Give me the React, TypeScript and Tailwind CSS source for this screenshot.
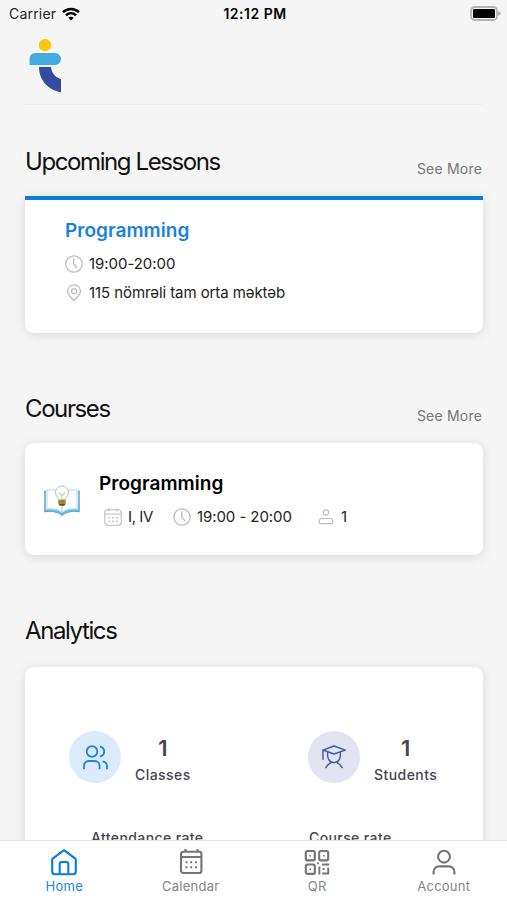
import type { ReactNode } from "react";

function Logo() {
    return (
        <svg width="32" height="54" viewBox="0 0 32 54">
            <circle cx="16" cy="6.2" r="6.2" fill="#fdc70d" />
            <path d="M6 14h20a6 6 0 0 1 0 12H.6V19.500A5.500 5.500 0 0 1 6 14z" fill="#43abe0" />
            <path d="M10 28h12c.5 5.500 4 10.500 10 12v13.200C19 51 10 41 10 28z" fill="#344c9f" />
        </svg>
    );
}

function Wifi() {
    return (
        <svg width="18" height="14" viewBox="0 0 18 14" fill="none" stroke="#000" strokeWidth="2.500">
            <path d="M1 5.200C5.500 .8 12.500 .8 17 5.200" />
            <path d="M4 8.300c2.900-2.700 7.100-2.700 10 0" />
            <path d="M6.300 10.700c1.600-1.400 3.800-1.400 5.400 0L9 13.500z" fill="#000" stroke="none" />
        </svg>
    );
}

function Battery() {
    return (
        <svg width="31" height="15" viewBox="0 0 31 15">
            <rect x="1" y="1" width="26" height="13" rx="3.500" fill="#f5f5f5" stroke="#b3b3b3" strokeWidth="1.800" />
            <rect x="3" y="3" width="22" height="9" rx="1" fill="#000" />
            <path d="M28 5.200v4.600q3-.8 3-2.300t-3-2.300z" fill="#b3b3b3" />
        </svg>
    );
}

function Clock() {
    return (
        <svg width="18" height="18" viewBox="0 0 18 18" fill="none" stroke="#bdbdbd" strokeWidth="1.300" strokeLinecap="round">
            <circle cx="9" cy="9" r="8.200" />
            <path d="M8.700 4v5l3 3.500" />
        </svg>
    );
}

function Pin() {
    return (
        <svg width="18" height="18" viewBox="0 0 18 18" fill="none" stroke="#bdbdbd" strokeWidth="1.300" strokeLinejoin="round">
            <path d="M9 16.800C7.500 14.500 2.600 11.500 2.600 7a6.400 6.200 0 0 1 12.800 0c0 4.500-4.900 7.500-6.400 9.800z" />
            <circle cx="9" cy="7.200" r="2.500" />
        </svg>
    );
}

function SmallCalendar() {
    return (
        <svg width="18" height="18" viewBox="0 0 18 18" fill="none" stroke="#bdbdbd" strokeWidth="1.100" strokeLinecap="round">
            <rect x=".8" y="1.800" width="16.400" height="15.400" rx="3" />
            <path d="M1 6h16M5 .7v2.200M13 .7v2.200" />
            <path d="M4.700 9.700h.6M8.700 9.700h.6M12.700 9.700h.6M4.700 13.300h.6M8.700 13.300h.6M12.700 13.300h.6" strokeWidth="1.400" />
        </svg>
    );
}

function SmallUser() {
    return (
        <svg width="16" height="16" viewBox="0 0 16 16" fill="none" stroke="#bdbdbd" strokeWidth="1.200">
            <circle cx="8" cy="3.500" r="2.700" />
            <path d="M4 9.500h8a2.800 2.800 0 0 1 2.800 2.800v.7a1.700 1.700 0 0 1-1.700 1.700H2.900A1.700 1.700 0 0 1 1.200 13v-.7A2.800 2.800 0 0 1 4 9.500z" />
        </svg>
    );
}

function Book() {
    return (
        <svg width="36" height="32" viewBox="0 0 36 32" fill="none">
            <path d="M1 5.500v21c6-.8 12-.5 17 3.500 5-4 11-4.300 17-3.500v-21" stroke="#369ac0" strokeWidth="1.300" />
            <path d="M1.500 24.500c6-.8 12.500-.3 16.500 3.500 4-3.800 10.500-4.300 16.500-3.500v2.300c-6-.6-12 0-16.500 4-4.500-4-10.500-4.600-16.500-4z" fill="#68b9d9" />
            <path d="M3 5v19c6-.6 11 .2 15 3.500 4-3.300 9-4.100 15-3.500V5c-5-.6-11 0-15 3.500C14 5 8 4.400 3 5z" fill="#fff" stroke="#a4d2e4" strokeWidth=".9" />
            <path d="M18 20v8" stroke="#8bb8c8" strokeWidth=".8" />
            <path d="M14.500 15c0-2.400-3-3.500-3-7.500a6.500 6.500 0 0 1 13 0c0 4-3 5.100-3 7.500z" fill="#fdfefc" stroke="#b2bac0" strokeWidth=".9" />
            <path d="M15.200 7.500l2.800 3.500 2.800-3.500M18 11v4" stroke="#b5e6a1" strokeWidth="1.300" />
            <path d="M14.300 14.700h7.400v4l-1.400 1.700h-4.600l-1.400-1.700z" fill="#a38435" />
            <path d="M14.600 19h6.800l-1.400 1.700h-4z" fill="#655528" />
        </svg>
    );
}

function UsersIcon() {
    return (
        <svg width="25" height="25" viewBox="0 0 25 25" fill="none" stroke="#1b84dc" strokeWidth="1.800" strokeLinecap="butt" strokeLinejoin="round">
            <circle cx="9" cy="6.500" r="5.300" />
            <path d="M1 24.300v-3.500a4.800 4.800 0 0 1 4.800-4.800h6a4.800 4.800 0 0 1 4.800 4.800v3.500" />
            <path d="M17 1.300c5.600 2 5.600 8.400 0 10.400M19.500 16.300c3 .6 4.500 2.300 4.500 4.700v3.300" />
        </svg>
    );
}

function StudentIcon() {
    return (
        <svg width="24" height="24" viewBox="0 0 24 24" fill="none" stroke="#3d56ae" strokeWidth="1.400" strokeLinecap="round" strokeLinejoin="round">
            <path d="M1 5.200L12 1l11.300 4.200-6 2L12 9 6.500 7z" />
            <path d="M1 5.200v9" />
            <path d="M5.700 7.500c-.8 5 1 10.100 6.300 10.100s7.100-5.100 6.300-10.100" />
            <path d="M3.800 22.600c1.200-2.200 3.200-4 5.200-5M20.200 22.600c-1.200-2.200-3.200-4-5.200-5" />
        </svg>
    );
}

function HomeIcon() {
    return (
        <svg width="26" height="27" viewBox="0 0 26 27" fill="none" stroke="#087cdf" strokeWidth="2.100" strokeLinejoin="round">
            <path d="M1.200 11q0-1 .8-1.600L13 1.200l11 8.200q.8.600.8 1.600v11.500a2.800 2.800 0 0 1-2.800 2.800H4a2.800 2.800 0 0 1-2.800-2.800z" />
            <path d="M8.700 25V15a2 2 0 0 1 2-2h4.600a2 2 0 0 1 2 2v10" />
        </svg>
    );
}

function CalendarIcon() {
    return (
        <svg width="26" height="27" viewBox="0 0 26 27" fill="none" stroke="#747474" strokeWidth="2.100">
            <rect x="3" y="2.800" width="20.400" height="21.200" rx="2.300" />
            <path d="M3 8h20" strokeWidth="2" />
            <path d="M7.500 0v3M19.500 0v3" />
            <path d="M7.500 13.300h2M12.200 13.300h2M17 13.300h2M7.500 18.200h2M12.200 18.200h2M17 18.200h2" strokeWidth="2" />
        </svg>
    );
}

function QrIcon() {
    return (
        <svg width="26" height="27" viewBox="0 0 26 27" fill="none" stroke="#747474" strokeWidth="2.100">
            <rect x="1.800" y="2" width="9" height="9.400" rx="1.600" />
            <rect x="15.200" y="2" width="9" height="9.400" rx="1.600" />
            <rect x="1.800" y="15.500" width="9" height="9.400" rx="1.600" />
            <path d="M5.500 6.700H7M19 6.700h1.500M5.500 20.200H7" strokeWidth="1.500" />
            <path d="M13.200 14.300h1.700M15.400 17.500v8M18 15.500h7.200M24.200 18.500v6h-6M18.500 20h2" strokeWidth="1.900" />
        </svg>
    );
}

function AccountIcon() {
    return (
        <svg width="26" height="27" viewBox="0 0 26 27" fill="none" stroke="#747474" strokeWidth="2.100">
            <circle cx="13" cy="7.700" r="5.900" />
            <path d="M2.600 25.400v-2.700a5.300 5.300 0 0 1 5.300-5.300h10.200a5.300 5.300 0 0 1 5.300 5.300v2.700" />
        </svg>
    );
}

function SectionTitle({ title, more }: { title: string; more?: boolean }) {
    return (
        <div className="flex h-7 items-end justify-between">
            <h2 className="text-[24px] leading-7 tracking-[-1.4px] text-[#111]">{title}</h2>
            {more && <a className="text-[14px] leading-[14px] tracking-[0.2px] text-[#777]">See More</a>}
        </div>
    );
}

function Stat({ icon, label, color }: { icon: ReactNode; label: string; color: string }) {
    return (
        <div className="flex h-[60px] items-start">
            <div className={"mt-1 flex h-[52px] w-[52px] items-center justify-center rounded-full " + color}>{icon}</div>
            <div className="ml-[14px] flex flex-col items-center pt-[7px] text-[#45444f]">
                <span className="text-[22px] font-semibold leading-7">1</span>
                <span className="text-[14px] font-medium leading-[26px] tracking-[0.45px]">{label}</span>
            </div>
        </div>
    );
}

function Tab({ icon, label, active }: { icon: ReactNode; label: string; active?: boolean }) {
    return (
        <div className={active ? "flex flex-1 flex-col items-center text-[#1687e8]" : "flex flex-1 flex-col items-center text-[#858585]"}>
            {icon}
            <span className="text-[13px] leading-5 tracking-[0.25px]">{label}</span>
        </div>
    );
}

export default function App() {
    return (
        <div className="flex h-[900px] w-[507px] flex-col overflow-hidden bg-[#f5f5f5] font-['Inter','Noto_Sans',sans-serif]">
            <div className="grid h-[27px] shrink-0 grid-cols-3 items-center pl-[9px] pr-[6px]">
                <div className="flex items-center gap-[6px] text-[14px] tracking-[0.2px] text-[#222]">
                    Carrier
                    <Wifi />
                </div>
                <div className="text-center text-[14px] font-semibold tracking-[0.5px] text-black">12:12 PM</div>
                <div className="flex justify-end"><Battery /></div>
            </div>

            <main className="min-h-0 flex-1 overflow-hidden px-[25px]">
                <div className="h-[78px] border-b border-[#ececec] pl-1 pt-3">
                    <Logo />
                </div>

                <section className="mt-[43px]">
                    <SectionTitle title="Upcoming Lessons" more />
                    <div className="mt-5 h-[137px] w-[458px] rounded-b-[9px] border-t-4 border-[#087cdf] bg-white pl-10 pt-[17px] shadow-[0_2px_12px_rgba(0,0,0,0.12)]">
                        <h3 className="text-[19px] font-semibold leading-7 tracking-[0.05px] text-[#1682e0]">Programming</h3>
                        <div className="mt-[5px] flex h-[27px] items-center gap-[6px] text-[15px] tracking-[-0.05px] text-[#222]"><Clock /><span className="pt-px">19:00-20:00</span></div>
                        <div className="mt-[2px] flex h-[27px] items-center gap-[6px] text-[15px] tracking-[-0.08px] text-[#222]"><Pin /><span className="pt-[2px]">115 nömrəli tam orta məktəb</span></div>
                    </div>
                </section>

                <section className="mt-[62px]">
                    <SectionTitle title="Courses" more />
                    <div className="mt-5 flex h-[112px] w-[458px] rounded-[9px] bg-white pl-[19px] shadow-[0_2px_12px_rgba(0,0,0,0.12)]">
                        <div className="mt-[42px]"><Book /></div>
                        <div className="ml-[19px] pt-[27px]">
                            <h3 className="text-[19px] font-semibold leading-7 tracking-[0.05px] text-black">Programming</h3>
                            <div className="mt-[5px] flex h-7 items-center pl-[5px] text-[15px] text-[#222]">
                                <div className="flex w-[69px] items-center gap-[6px] tracking-[-0.4px]"><SmallCalendar />I, IV</div>
                                <div className="flex w-[145px] items-center gap-[6px] tracking-[-0.08px]"><Clock />19:00 - 20:00</div>
                                <div className="flex items-center gap-[7px]"><SmallUser />1</div>
                            </div>
                        </div>
                    </div>
                </section>

                <section className="mt-[62px]">
                    <SectionTitle title="Analytics" />
                    <div className="mt-[22px] h-[300px] w-[458px] rounded-[9px] bg-white pl-11 pt-[60px] shadow-[0_2px_12px_rgba(0,0,0,0.12)]">
                        <div className="grid grid-cols-[239px_1fr]">
                            <Stat icon={<UsersIcon />} label="Classes" color="bg-[#dcebfb]" />
                            <Stat icon={<StudentIcon />} label="Students" color="bg-[#e2e4f2]" />
                        </div>
                        <div className="mt-[37px] grid grid-cols-[218px_1fr] pl-[22px] text-[14px] font-medium leading-7 tracking-[0.4px] text-[#45444f]">
                            <span>Attendance rate</span>
                            <span>Course rate</span>
                        </div>
                    </div>
                </section>
            </main>

            <nav className="flex h-[60px] shrink-0 border-t border-[#e4e4e4] bg-white pl-px pt-2">
                <Tab icon={<HomeIcon />} label="Home" active />
                <Tab icon={<CalendarIcon />} label="Calendar" />
                <Tab icon={<QrIcon />} label="QR" />
                <Tab icon={<AccountIcon />} label="Account" />
            </nav>
        </div>
    );
}
